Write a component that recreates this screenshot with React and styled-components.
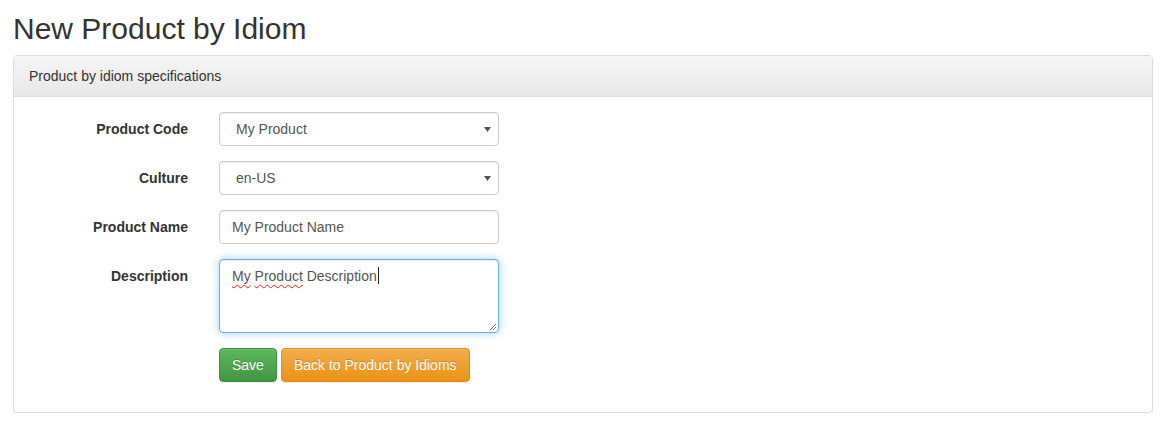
import React from 'react'
import styled, { createGlobalStyle } from 'styled-components'

const GlobalStyle = createGlobalStyle`
body {
    margin: 0;
    background: #fff;
    color: #333;
    font-family: "Liberation Sans", Arial, Helvetica, sans-serif;
    font-size: 14px;
    line-height: 1.42857;
}
* {
    box-sizing: border-box;
}
`

function App() {
    return (
        <Page>
            <GlobalStyle />
            <Title>New Product by Idiom</Title>
            <Panel>
                <PanelHeading>Product by idiom specifications</PanelHeading>
                <PanelBody>
                    <FormGroup>
                        <Label>Product Code</Label>
                        <SelectBox>
                            <Select defaultValue="my-product">
                                <option value="my-product">My Product</option>
                            </Select>
                            <Caret />
                        </SelectBox>
                    </FormGroup>
                    <FormGroup>
                        <Label>Culture</Label>
                        <SelectBox>
                            <Select defaultValue="en-US">
                                <option value="en-US">en-US</option>
                            </Select>
                            <Caret />
                        </SelectBox>
                    </FormGroup>
                    <FormGroup>
                        <Label>Product Name</Label>
                        <Input defaultValue="My Product Name" />
                    </FormGroup>
                    <FormGroup>
                        <Label>Description</Label>
                        <TextArea>
                            <Misspelled>My</Misspelled> <Misspelled>Product</Misspelled> Description<Cursor />
                            <Grip />
                        </TextArea>
                    </FormGroup>
                    <FormGroup>
                        <span />
                        <Actions>
                            <Button $variant="success">Save</Button>
                            <Button $variant="warning">Back to Product by Idioms</Button>
                        </Actions>
                    </FormGroup>
                </PanelBody>
            </Panel>
        </Page>
    )
}

const Caret = () => (
    <CaretSvg width="7" height="5" viewBox="0 0 7 5">
        <path d="M0 0 H7 L3.5 5 Z" fill="#555" />
    </CaretSvg>
)

const Grip = () => (
    <GripSvg width="9" height="9" viewBox="0 0 9 9">
        <path d="M8 2 L2 8 M8 5 L5 8" stroke="#777" strokeWidth="1" />
    </GripSvg>
)

const Page = styled.div`
padding: 0 18px 0 13px;
`

const Title = styled.h2`
margin: 12px 0 10px;
font-size: 30px;
font-weight: normal;
line-height: 1.1;
color: #333;
`

const Panel = styled.section`
border: 1px solid #ddd;
border-radius: 4px;
background: #fff;
box-shadow: 0 1px 1px rgba(0, 0, 0, .05);
`

const PanelHeading = styled.div`
padding: 10px 15px;
line-height: 20px;
color: #333;
border-bottom: 1px solid #ddd;
border-radius: 3px 3px 0 0;
background: linear-gradient(to bottom, #f5f5f5 0%, #e8e8e8 100%);
`

const PanelBody = styled.div`
padding: 15px;
`

const FormGroup = styled.div`
display: grid;
grid-template-columns: 160px 1fr;
column-gap: 30px;
margin-bottom: 15px;
`

const Label = styled.label`
padding-top: 7px;
padding-right: 1px;
text-align: right;
font-weight: bold;
line-height: 20px;
`

const controlStyles = `
width: 280px;
height: 34px;
padding: 6px 12px;
border: 1px solid #ccc;
border-radius: 4px;
background: #fff;
color: #555;
font-family: inherit;
font-size: 14px;
line-height: 20px;
box-shadow: inset 0 1px 1px rgba(0, 0, 0, .075);
outline: none;
`

const SelectBox = styled.div`
position: relative;
width: 280px;
`

const Select = styled.select`
${controlStyles}
appearance: none;
padding-left: 16px;
`

const CaretSvg = styled.svg`
position: absolute;
right: 8px;
top: 15px;
pointer-events: none;
`

const Input = styled.input`
${controlStyles}
`

const TextArea = styled.div`
${controlStyles}
position: relative;
height: 74px;
color: #555;
border-color: #66afe9;
box-shadow: inset 0 1px 1px rgba(0, 0, 0, .075), 0 0 8px rgba(102, 175, 233, .6);
`

const Misspelled = styled.span`
text-decoration: underline wavy #e02020;
text-decoration-thickness: 1px;
text-underline-offset: 3px;
`

const Cursor = styled.span`
display: inline-block;
width: 1px;
height: 17px;
margin-left: 1px;
vertical-align: -3px;
background: #222;
`

const GripSvg = styled.svg`
position: absolute;
right: 1px;
bottom: 1px;
`

const Actions = styled.div`
display: flex;
gap: 4px;
`

const variants = {
    success: {
        top: '#5cb85c',
        bottom: '#419641',
        border: '#3e8f3e',
    },
    warning: {
        top: '#f0ad4e',
        bottom: '#eb9316',
        border: '#e38d13',
    },
}

const Button = styled.button`
padding: 6px 12px;
border: 1px solid ${props => variants[props.$variant].border};
border-radius: 4px;
background: linear-gradient(to bottom, ${props => variants[props.$variant].top} 0%, ${props => variants[props.$variant].bottom} 100%);
color: #fff;
font-family: inherit;
font-size: 14px;
line-height: 20px;
text-shadow: 0 -1px 0 rgba(0, 0, 0, .2);
box-shadow: inset 0 1px 0 rgba(255, 255, 255, .15), 0 1px 1px rgba(0, 0, 0, .075);
cursor: pointer;
`

export default App
